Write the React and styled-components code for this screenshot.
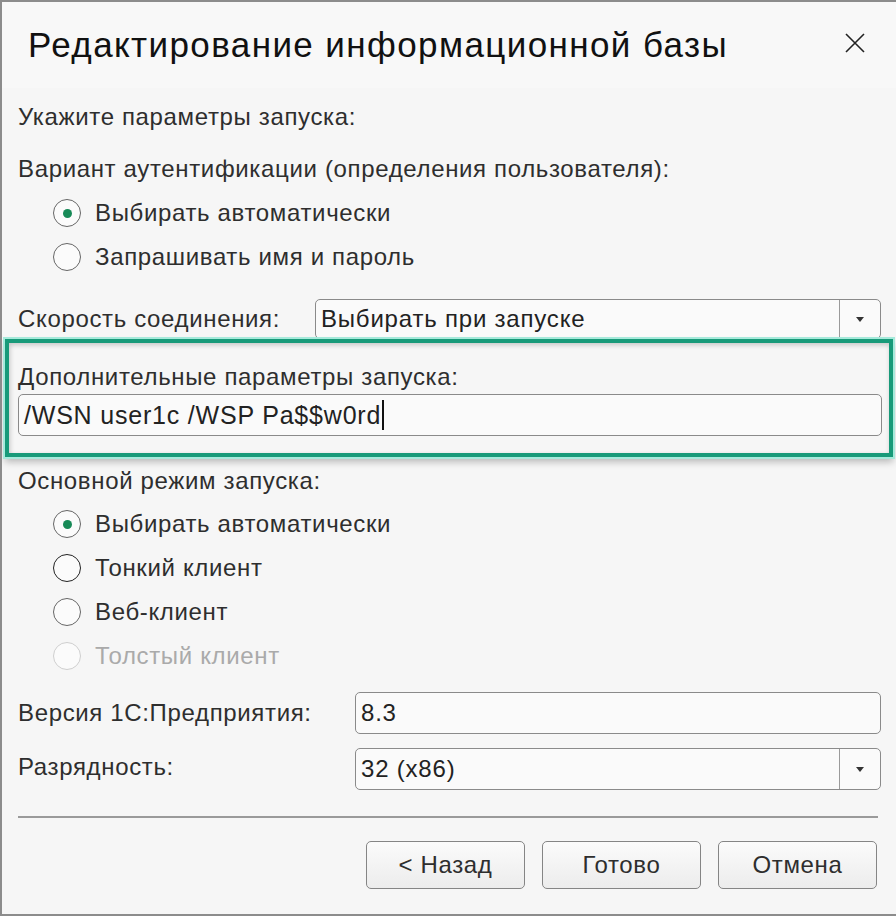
import React from "react";
import styled, { createGlobalStyle } from "styled-components";

const Global = createGlobalStyle`
  html, body { margin: 0; padding: 0; background: #f6f6f6; }
  * { box-sizing: border-box; }
  body { font-family: "Liberation Sans", Arial, sans-serif; }
`;

const Window = styled.div`
  width: 896px;
  height: 916px;
  background: #f6f6f6;
  border-left: 2px solid #8c8c8c;
  border-top: 2px solid #8c8c8c;
  border-bottom: 2px solid #8c8c8c;
  display: flex;
  flex-direction: column;
  color: #2e2e2e;
  overflow: hidden;
`;

const TitleBar = styled.div`
  height: 86px;
  display: flex;
  align-items: center;
  justify-content: space-between;
  padding: 0 28px 0 26px;
  background: #f8f8f8;
`;

const Title = styled.h1`
  margin: 0;
  font-size: 35px;
  font-weight: 400;
  color: #111;
  letter-spacing: 1.4px;
  white-space: nowrap;
`;

const CloseButton = styled.button`
  width: 26px;
  height: 26px;
  padding: 0;
  border: none;
  background: transparent;
  display: flex;
  align-items: center;
  justify-content: center;
  margin-top: -4px;
`;

const Content = styled.div`
  display: flex;
  flex-direction: column;
  padding: 0 15px 0 16px;
`;

const Text = styled.div`
  font-size: 24px;
  letter-spacing: 0.65px;
  line-height: 30px;
  color: ${(p) => (p.$disabled ? "#aaaaaa" : "#2e2e2e")};
  margin-top: ${(p) => p.$mt || 0}px;
  white-space: nowrap;
`;

const RadioGroup = styled.div`
  display: flex;
  flex-direction: column;
  margin-top: ${(p) => p.$mt || 0}px;
  padding-left: 35px;
`;

const RadioRow = styled.label`
  height: 44px;
  display: flex;
  align-items: center;
  gap: 14px;
`;

const RadioCircle = styled.span`
  width: 28px;
  height: 28px;
  border-radius: 50%;
  border: 1.5px solid ${(p) => p.$color};
  background: #fbfbfb;
  display: flex;
  align-items: center;
  justify-content: center;
  flex-shrink: 0;
  &::after {
    content: "";
    display: ${(p) => (p.$checked ? "block" : "none")};
    width: 9px;
    height: 9px;
    border-radius: 50%;
    background: #178a57;
  }
`;

const FieldRow = styled.div`
  display: flex;
  align-items: center;
  margin-top: ${(p) => p.$mt || 0}px;
`;

const FieldLabel = styled.div`
  width: ${(p) => p.$w}px;
  flex-shrink: 0;
  font-size: 24px;
  letter-spacing: 0.65px;
  line-height: 30px;
  color: #2e2e2e;
  white-space: nowrap;
  margin-top: ${(p) => p.$dy || 0}px;
`;

const Box = styled.div`
  flex: 1;
  height: ${(p) => p.$h || 42}px;
  border: 1px solid #8a8a8a;
  border-radius: 5px;
  background: #fafafa;
  display: flex;
  align-items: stretch;
`;

const BoxValue = styled.div`
  flex: 1;
  display: flex;
  align-items: center;
  padding-left: 5px;
  font-size: ${(p) => p.$size || 24}px;
  letter-spacing: 0.8px;
  color: #222;
  white-space: nowrap;
`;

const DropButton = styled.div`
  width: 41px;
  border-left: 1px solid #9a9a9a;
  display: flex;
  align-items: center;
  justify-content: center;
`;

const Caret = styled.span`
  width: 0;
  height: 0;
  border-left: 4px solid transparent;
  border-right: 4px solid transparent;
  border-top: 5px solid #333;
`;

const Highlight = styled.div`
  margin: 0 -12px 0 -13px;
  border: 4px solid #189a79;
  box-shadow: 0 0 0 2px #a6eadb, 0 5px 7px rgba(0, 0, 0, 0.25),
    inset 1px 2px 5px rgba(0, 0, 0, 0.2);
  padding: 19px 7px 17px 9px;
  display: flex;
  flex-direction: column;
`;

const Cursor = styled.span`
  display: inline-block;
  width: 1.5px;
  height: 30px;
  background: #111;
  margin-left: 1px;
`;

const Divider = styled.hr`
  margin: 26px 3px 0 0;
  border: none;
  height: 2px;
  background: #9a9a9a;
`;

const ButtonBar = styled.div`
  display: flex;
  justify-content: flex-end;
  gap: 17px;
  margin-top: 23px;
  padding-right: 4px;
`;

const Button = styled.button`
  width: 159px;
  height: 48px;
  border: 1px solid #858585;
  border-radius: 5px;
  background: linear-gradient(#fbfbfb, #ececec);
  font-family: "Liberation Sans", Arial, sans-serif;
  font-size: 24px;
  letter-spacing: 0.65px;
  color: #2e2e2e;
  padding: 0;
`;

function Radio({ label, checked, color = "#666", disabled }) {
  return (
    <RadioRow>
      <RadioCircle $checked={checked} $color={disabled ? "#cfcfcf" : color} />
      <Text $disabled={disabled}>{label}</Text>
    </RadioRow>
  );
}

export default function App() {
  return (
    <>
      <Global />
      <Window>
        <TitleBar>
          <Title>Редактирование информационной базы</Title>
          <CloseButton aria-label="Закрыть">
            <svg width="20" height="20" viewBox="0 0 20 20">
              <path d="M1 1 L19 19 M19 1 L1 19" stroke="#222" strokeWidth="1.6" fill="none" />
            </svg>
          </CloseButton>
        </TitleBar>
        <Content>
          <Text $mt={14}>Укажите параметры запуска:</Text>
          <Text $mt={22}>Вариант аутентификации (определения пользователя):</Text>
          <RadioGroup $mt={7}>
            <Radio label="Выбирать автоматически" checked />
            <Radio label="Запрашивать имя и пароль" />
          </RadioGroup>
          <FieldRow $mt={20}>
            <FieldLabel $w={297}>Скорость соединения:</FieldLabel>
            <Box $h={40}>
              <BoxValue>Выбирать при запуске</BoxValue>
              <DropButton>
                <Caret />
              </DropButton>
            </Box>
          </FieldRow>
          <Highlight>
            <Text>Дополнительные параметры запуска:</Text>
            <FieldRow $mt={2}>
              <Box $h={42}>
                <BoxValue $size={25}>
                  /WSN user1c /WSP Pa$$w0rd
                  <Cursor />
                </BoxValue>
              </Box>
            </FieldRow>
          </Highlight>
          <Text $mt={9}>Основной режим запуска:</Text>
          <RadioGroup $mt={6}>
            <Radio label="Выбирать автоматически" checked />
            <Radio label="Тонкий клиент" color="#222" />
            <Radio label="Веб-клиент" />
            <Radio label="Толстый клиент" disabled />
          </RadioGroup>
          <FieldRow $mt={14}>
            <FieldLabel $w={337}>Версия 1С:Предприятия:</FieldLabel>
            <Box $h={42}>
              <BoxValue>8.3</BoxValue>
            </Box>
          </FieldRow>
          <FieldRow $mt={14}>
            <FieldLabel $w={337} $dy={-4}>Разрядность:</FieldLabel>
            <Box $h={42}>
              <BoxValue>32 (x86)</BoxValue>
              <DropButton>
                <Caret />
              </DropButton>
            </Box>
          </FieldRow>
          <Divider />
          <ButtonBar>
            <Button>&lt; Назад</Button>
            <Button>Готово</Button>
            <Button>Отмена</Button>
          </ButtonBar>
        </Content>
      </Window>
    </>
  );
}
